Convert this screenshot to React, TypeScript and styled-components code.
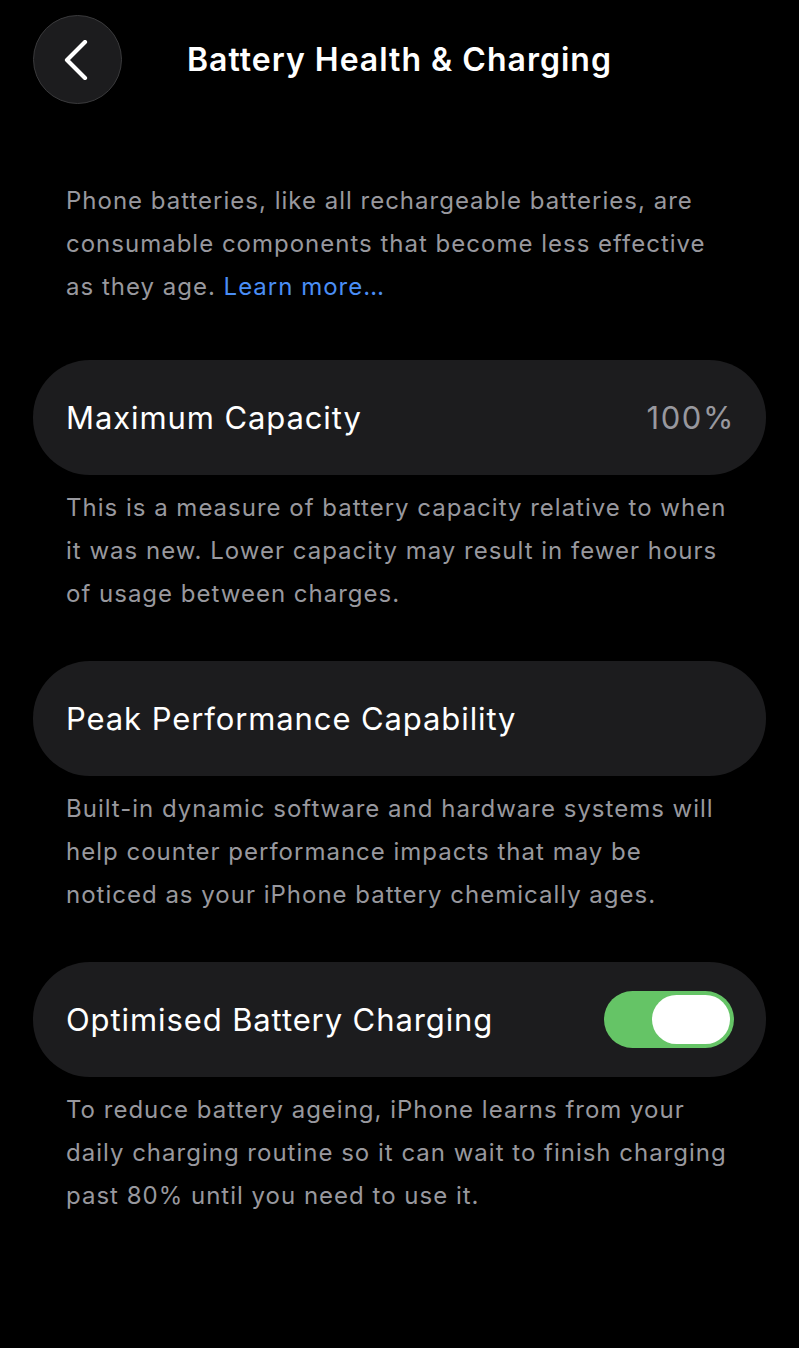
import React from "react";
import styled, { createGlobalStyle } from "styled-components";

const Global = createGlobalStyle`
  html, body { margin: 0; padding: 0; background: #000; }
  body { font-family: Inter, "Noto Sans", "Liberation Sans", sans-serif; -webkit-font-smoothing: antialiased; }
`;

const Page = styled.div`
  width: 799px;
  min-height: 1348px;
  background: #000;
  box-sizing: border-box;
  padding: 15px 33px 0 33px;
`;

const Header = styled.header`
  display: flex;
  align-items: center;
  gap: 65px;
  height: 89px;
`;

const BackButton = styled.button`
  width: 89px;
  height: 89px;
  border-radius: 50%;
  background: #1c1c1e;
  border: 1px solid #3a3a3c;
  display: flex;
  align-items: center;
  justify-content: center;
  padding: 0;
  box-sizing: border-box;
  flex-shrink: 0;
`;

const Title = styled.h1`
  margin: 0;
  color: #fff;
  font-size: 32px;
  font-weight: 600;
  letter-spacing: 1px;
`;

const Note = styled.p<{ $after?: number }>`
  margin: 0 0 ${(p) => p.$after ?? 46}px 0;
  padding: 0 33px;
  color: #98989e;
  font-size: 24px;
  line-height: 43px;
  letter-spacing: 1px;
`;

const Intro = styled(Note)`
  margin-top: 75px;
`;

const Link = styled.span`
  color: #4a8ef5;
`;

const Card = styled.div`
  height: 115px;
  border-radius: 57px;
  background: #1c1c1e;
  display: flex;
  align-items: center;
  justify-content: space-between;
  padding: 0 33px;
  margin-bottom: 11px;
  box-sizing: border-box;
`;

const Label = styled.span`
  color: #fff;
  font-size: 31px;
  letter-spacing: 0.9px;
`;

const Value = styled.span`
  color: #98989e;
  font-size: 31px;
  letter-spacing: 1.6px;
  margin-right: -2px;
`;

const Switch = styled.div<{ $on: boolean }>`
  width: 130px;
  height: 57px;
  border-radius: 29px;
  background: ${(p) => (p.$on ? "#65c466" : "#39393d")};
  display: flex;
  align-items: center;
  justify-content: ${(p) => (p.$on ? "flex-end" : "flex-start")};
  padding: 0 4px;
  box-sizing: border-box;
  margin-right: -1px;
`;

const Knob = styled.div`
  width: 78px;
  height: 49px;
  border-radius: 25px;
  background: #fff;
`;

export default function App() {
  return (
    <>
      <Global />
      <Page>
        <Header>
          <BackButton aria-label="Back">
            <svg width="30" height="40" viewBox="0 0 30 40" fill="none">
              <path d="M22 2 L4 20 L22 38" stroke="#fff" strokeWidth="4.2" strokeLinecap="round" strokeLinejoin="round" />
            </svg>
          </BackButton>
          <Title>Battery Health &amp; Charging</Title>
        </Header>
        <Intro $after={52}>
          Phone batteries, like all rechargeable batteries, are consumable components that become less effective as they age. <Link>Learn more…</Link>
        </Intro>
        <Card>
          <Label>Maximum Capacity</Label>
          <Value>100%</Value>
        </Card>
        <Note>
          This is a measure of battery capacity relative to when it was new. Lower capacity may result in fewer hours of usage between charges.
        </Note>
        <Card>
          <Label>Peak Performance Capability</Label>
        </Card>
        <Note>
          Built-in dynamic software and hardware systems will help counter performance impacts that may be noticed as your iPhone battery chemically ages.
        </Note>
        <Card>
          <Label>Optimised Battery Charging</Label>
          <Switch $on>
            <Knob />
          </Switch>
        </Card>
        <Note>
          To reduce battery ageing, iPhone learns from your daily charging routine so it can wait to finish charging past 80% until you need to use it.
        </Note>
      </Page>
    </>
  );
}
